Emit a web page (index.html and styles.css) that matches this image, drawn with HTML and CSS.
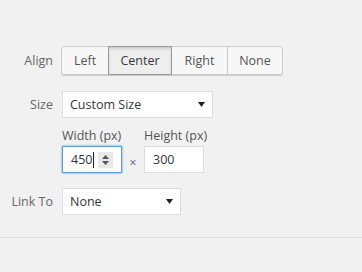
FILE: index.html
```html
<!DOCTYPE html>
<html lang="en">

<head>
    <meta charset="UTF-8">
    <title>Image Settings</title>
    <link rel="stylesheet" href="styles.css">
</head>

<body>

    <div class="settings">
        <div class="row">
            <span class="label">Align</span>
            <div class="btn-group">
                <button class="btn btn-left">Left</button>
                <button class="btn btn-center active">Center</button>
                <button class="btn btn-right">Right</button>
                <button class="btn btn-none">None</button>
            </div>
        </div>

        <div class="row row-size">
            <span class="label">Size</span>
            <div class="select select-size">
                <span>Custom Size</span>
                <svg class="arrow" width="7" height="5" viewBox="0 0 7 5"><path d="M0 0h7L3.5 5z" fill="#222"/></svg>
            </div>
        </div>

        <div class="dims">
            <div class="dim">
                <span class="dim-label">Width (px)</span>
                <div class="field focus">
                    <span class="value">450</span><span class="caret"></span>
                    <span class="spin">
                        <svg width="9" height="12" viewBox="0 0 9 12"><path d="M4.5 1L8 5H1z M4.5 11L8 7H1z" fill="#555"/></svg>
                    </span>
                </div>
            </div>
            <span class="times">&times;</span>
            <div class="dim">
                <span class="dim-label">Height (px)</span>
                <div class="field">
                    <span class="value">300</span>
                </div>
            </div>
        </div>

        <div class="row row-link">
            <span class="label">Link To</span>
            <div class="select select-link">
                <span>None</span>
                <svg class="arrow" width="7" height="5" viewBox="0 0 7 5"><path d="M0 0h7L3.5 5z" fill="#222"/></svg>
            </div>
        </div>
    </div>

    <hr class="sep">

</body>

</html>
```

FILE: styles.css
```css
body {
    font-family: "Open Sans", Arial, sans-serif;
    font-size: 12.5px;
    background-color: #f1f1f1;
    color: #555;
    margin: 0;
    padding: 0;
}

.settings {
    padding-top: 46px;
}

.row {
    display: flex;
    align-items: center;
}

.label {
    width: 53px;
    text-align: right;
    margin-right: 8px;
    color: #666;
}

.btn-group {
    display: flex;
    border-radius: 3px;
    box-shadow: 0 1px 0 #ccc;
}

.btn {
    font-family: inherit;
    font-size: 12.5px;
    color: #555;
    background-color: #f7f7f7;
    border: 1px solid #ccc;
    margin: 0 0 0 -1px;
    height: 29px;
    padding: 0;
    cursor: pointer;
}

.btn:first-child {
    margin-left: 0;
    border-radius: 3px 0 0 3px;
}

.btn:last-child {
    border-radius: 0 3px 3px 0;
}

.btn-left {
    width: 48px;
}

.btn-center {
    width: 64px;
}

.btn-right {
    width: 57px;
}

.btn-none {
    width: 56px;
}

.btn.active {
    background-color: #eee;
    border-color: #999;
    color: #32373c;
    position: relative;
    box-shadow: inset 0 2px 5px -3px rgba(0, 0, 0, 0.5);
}

.row-size {
    margin-top: 16px;
}

.select {
    display: flex;
    align-items: center;
    justify-content: space-between;
    box-sizing: border-box;
    height: 27px;
    margin-left: 1px;
    padding: 0 7px 0 7px;
    background-color: #fff;
    border: 1px solid #ddd;
    color: #32373c;
}

.select-size {
    width: 151px;
}

.select-link {
    width: 119px;
}

.dims {
    display: flex;
    align-items: flex-end;
    margin-left: 62px;
    margin-top: 9px;
}

.dim {
    display: flex;
    flex-direction: column;
}

.dim-label {
    line-height: 18px;
    margin-bottom: 1px;
    color: #555;
}

.field {
    display: flex;
    align-items: center;
    box-sizing: border-box;
    width: 60px;
    height: 27px;
    padding: 0 8px 0 8px;
    background-color: #fff;
    border: 1px solid #ddd;
    color: #32373c;
}

.field.focus {
    border-color: #5b9dd9;
    box-shadow: 0 0 2px rgba(30, 140, 190, 0.8);
}

.caret {
    width: 1px;
    height: 16px;
    margin-left: 1px;
    background-color: #222;
}

.spin {
    display: flex;
    align-items: center;
    justify-content: center;
    width: 15px;
    height: 16px;
    margin-left: auto;
    background-color: #e9e9e9;
}

.times {
    width: 22px;
    text-align: center;
    color: #55578a;
    font-size: 12px;
    line-height: 20px;
}

.row-link {
    margin-top: 15px;
}

.sep {
    margin: 22px 0 0 0;
    border: 0;
    border-top: 1px solid #ddd;
}
```
